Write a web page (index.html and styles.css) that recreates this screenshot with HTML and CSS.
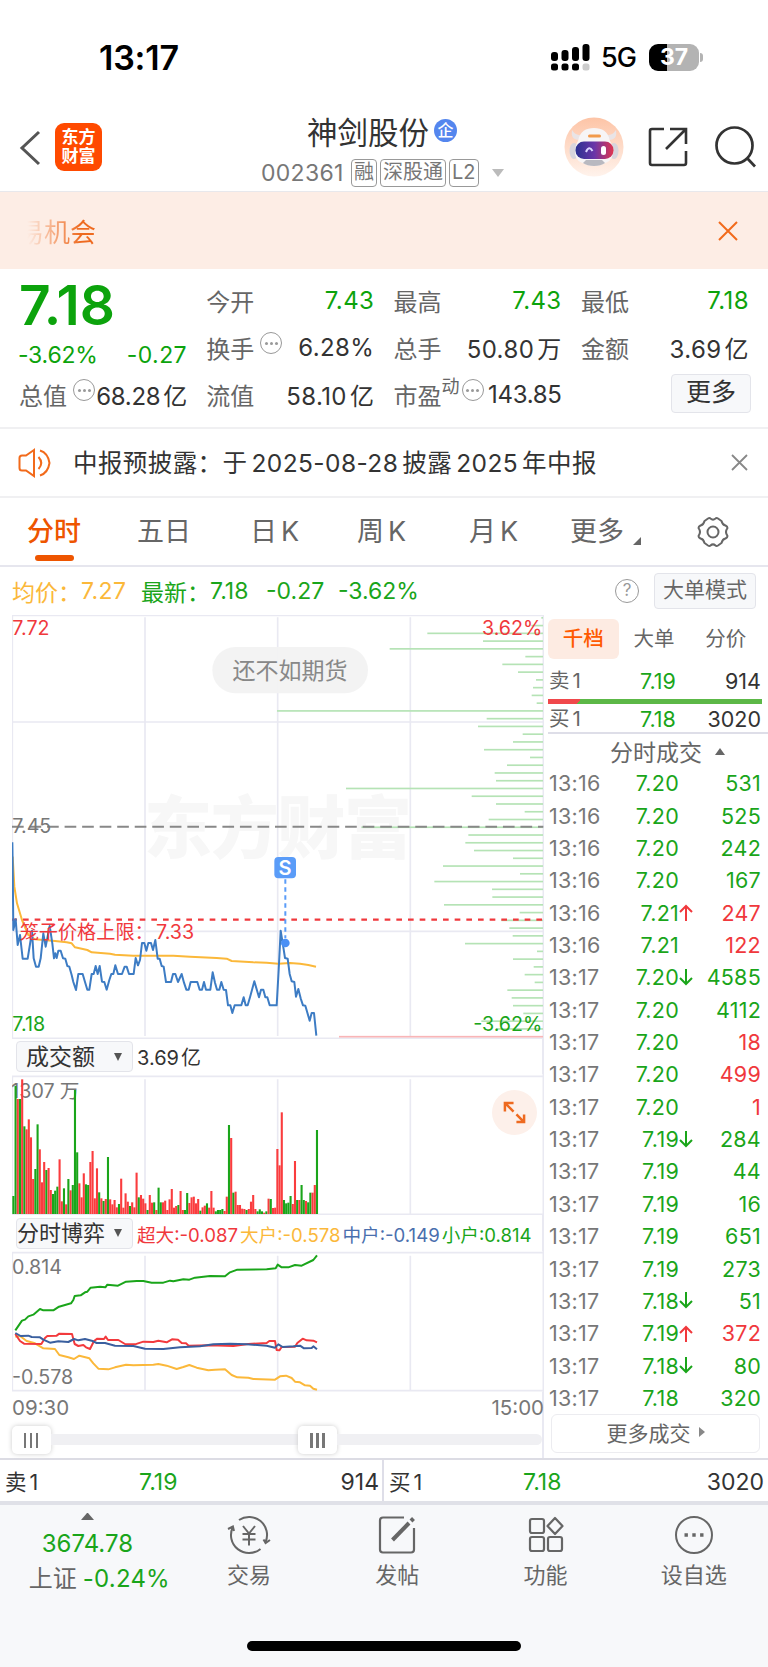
FILE: index.html
```
<!DOCTYPE html>
<html lang="zh-CN">
<head>
    <title>神剑股份 002361</title>
    <meta charset="UTF-8">
    <link rel="stylesheet" href="styles.css">
</head>
<body>
<div class="status">
    <div class="clock">13:17</div>
    <svg class="signal" width="39" height="27" viewBox="0 0 39 27">
        <rect x="0" y="8" width="7" height="9" rx="3"/>
        <rect x="10.500" y="6" width="7" height="11" rx="3"/>
        <rect x="21" y="3" width="7" height="14" rx="3"/>
        <rect x="31.500" y="0" width="7" height="17" rx="3"/>
        <rect x="0" y="19.500" width="7" height="7" rx="2.500"/>
        <rect x="10.500" y="19.500" width="7" height="7" rx="2.500"/>
        <rect x="21" y="19.500" width="7" height="7" rx="2.500"/>
        <rect x="31.500" y="19.500" width="7" height="7" rx="2.500" fill="#ccc"/>
    </svg>
    <div class="net">5G</div>
    <div class="battery">37</div>
    <div class="nub"></div>
</div>

<div class="header">
    <svg class="back" width="22" height="36" viewBox="0 0 22 36"><path d="M20 2 L3 18 L20 34" fill="none" stroke="#555" stroke-width="3"/></svg>
    <div class="logo">东方<br>财富</div>
    <div class="title">
        <div class="name">神剑股份<span class="qi">企</span></div>
        <div class="code"><span class="num">002361</span><i>融</i><i>深股通</i><i>L2</i><b></b></div>
    </div>
    <svg class="robot" width="60" height="60" viewBox="0 0 60 60">
        <defs>
            <linearGradient id="bg" x1="0" y1="0" x2="0" y2="1"><stop offset="0" stop-color="#fdc4a6"/><stop offset="1" stop-color="#fff3ec"/></linearGradient>
            <linearGradient id="face" x1="0" y1="0" x2="1" y2="0"><stop offset="0" stop-color="#2b3191"/><stop offset=".5" stop-color="#6a35a8"/><stop offset="1" stop-color="#e0364f"/></linearGradient>
        </defs>
        <circle cx="30" cy="30" r="29.500" fill="url(#bg)"/>
        <path d="M8 13 C7 20 9 22 14 23 L17 18 C12 18 10 16 8 13 Z M52 13 C53 20 51 22 46 23 L43 18 C48 18 50 16 52 13 Z" fill="#e9e4e6"/>
        <ellipse cx="10" cy="34" rx="4.500" ry="8" fill="#d7d5dc"/>
        <ellipse cx="50" cy="34" rx="4.500" ry="8" fill="#d7d5dc"/>
        <path d="M14 24 C16 14 22 11 30 11 C38 11 44 14 46 24 C51 32 50 44 41 46 C36 50 24 50 19 46 C10 44 9 32 14 24 Z" fill="#f7f5f6"/>
        <path d="M19 46 C24 50 36 50 41 46 L38 43 L22 43 Z" fill="#b9b9c0"/>
        <rect x="24" y="17.500" width="13" height="3" rx="1.500" fill="#f29a4b"/>
        <rect x="11.500" y="24.500" width="38" height="17.500" rx="8.500" fill="url(#face)"/>
        <path d="M22 35 Q25 28 28.500 34" fill="none" stroke="#d9d4ff" stroke-width="2"/>
        <rect x="37" y="29" width="5" height="9" rx="2.500" fill="#fff"/>
    </svg>
    <svg class="share" width="40" height="40" viewBox="0 0 40 40" fill="none" stroke="#333" stroke-width="2.600">
        <path d="M16 2 H4 Q2 2 2 4 V36 Q2 38 4 38 H36 Q38 38 38 36 V24"/>
        <path d="M22 2 H38 V17 M38 2 L18 22"/>
    </svg>
    <svg class="search" width="42" height="42" viewBox="0 0 42 42" fill="none" stroke="#333" stroke-width="2.700">
        <circle cx="19.500" cy="19.500" r="18"/><path d="M32 32 L40 40.500"/>
    </svg>
</div>

<div class="banner">
    <span class="fade">易机会</span>
    <svg width="20" height="20" viewBox="0 0 20 20"><path d="M1 1 L19 19 M19 1 L1 19" stroke="#f26a1b" stroke-width="2"/></svg>
</div>

<div class="quote">
    <div class="cell price">7.18</div>
    <div class="cell"><span>今开</span><em class="green">7.43</em></div>
    <div class="cell"><span>最高</span><em class="green">7.43</em></div>
    <div class="cell"><span>最低</span><em class="green">7.18</em></div>

    <div class="cell change"><em class="green">-3.62%</em><em class="green">-0.27</em></div>
    <div class="cell"><span>换手</span><s class="dots"></s><em>6.28%</em></div>
    <div class="cell"><span>总手</span><em><u>50.80</u>万</em></div>
    <div class="cell"><span>金额</span><em><u>3.69</u>亿</em></div>

    <div class="cell"><span>总值</span><s class="dots"></s><em class="tight"><u>68.28</u>亿</em></div>
    <div class="cell"><span>流值</span><em><u>58.10</u>亿</em></div>
    <div class="cell"><span>市盈</span><sup>动</sup><s class="dots"></s><em class="tight">143.85</em></div>
    <div class="cell"><div class="more">更多</div></div>
</div>

<div class="notice">
    <svg width="34" height="30" viewBox="0 0 34 30" fill="none" stroke="#f26a1b" stroke-width="2">
        <path d="M16 2 L8 7.500 H4 Q1.500 7.500 1.500 10 V20 Q1.500 22.500 4 22.500 H8 L16 28 Z"/>
        <path d="M20.500 9 Q26 15 20.500 21 M22 2.500 Q30 5 31.500 15 Q30 25 22 27.500"/>
    </svg>
    <p>中报预披露：于<u>2025-08-28</u>披露<u>2025</u>年中报</p>
    <svg class="close" width="17" height="17" viewBox="0 0 17 17"><path d="M1 1 L16 16 M16 1 L1 16" stroke="#888" stroke-width="1.800"/></svg>
</div>

<div class="tabs">
    <div class="on">分时</div>
    <div>五日</div>
    <div>日<u>K</u></div>
    <div>周<u>K</u></div>
    <div>月<u>K</u></div>
    <div>更多<b></b></div>
    <svg width="32" height="32" viewBox="0 0 32 32" fill="none" stroke="#666" stroke-width="2">
        <path d="M11 2.500 Q12.500 1.500 13.500 2.500 Q16 4.800 18.500 2.500 Q19.500 1.500 21 2.500 L24.500 5 Q25.500 9 28.500 9.500 Q30.500 10.500 30.500 12 Q27.500 16 30.500 20 Q30.500 21.500 28.500 22.500 Q25.500 23 24.500 27 L21 29.500 Q19.500 30.500 18.500 29.500 Q16 27.200 13.500 29.500 Q12.500 30.500 11 29.500 L7.500 27 Q6.500 23 3.500 22.500 Q1.500 21.500 1.500 20 Q4.500 16 1.500 12 Q1.500 10.500 3.500 9.500 Q6.500 9 7.500 5 Z"/>
        <circle cx="16" cy="16" r="5.500"/>
    </svg>
</div>

<div class="avg">
    <span class="yellow w1">均价：</span><span class="yellow w2">7.27</span>
    <span class="green w1">最新：</span><span class="green w3">7.18</span><span class="green w4">-0.27</span><span class="green">-3.62%</span>
    <div class="help">?</div>
    <div class="mode">大单模式</div>
</div>

<div class="main">
    <div class="charts">
        <svg class="priceChart" width="532" height="424" viewBox="36 15 1596 1272">
            <g class="mark"><text x="432" y="730" textLength="804">东方财富</text></g>
            <g class="grid">
                <path d="M37 15 V1285 M435 22 V1278 M833 22 V1278 M1231 22 V1278 M1630 15 V1287 M36 16 H1632 M36 336 H1630 M36 964 H1630 M36 1285 H1630"/>
            </g>
            <g id="depth"></g>
            <path d="M36 650 H1630" stroke="#888" stroke-width="6" stroke-dasharray="35 17.600"/>
            <path d="M36 929 H1630" stroke="#f0383c" stroke-width="7" stroke-dasharray="17 18" stroke-dashoffset="2"/>
            <polyline class="line" stroke="#fbb83a" points="38,740 43,830 51,880 66,930 85,975 105,988 165,993 200,997 215,1000 225,1012 262,1020 275,1027 330,1031 345,1034 400,1037 520,1037 570,1040 650,1044 680,1046 695,1053 760,1057 800,1058 835,1061 870,1059 900,1061 925,1065 948,1070"/>
            <polyline class="line" stroke="#3d7cc4" points="37,697 38,760 40,960 47,928 53,1005 60,975 68,1046 83,1046 92,990 96,962 101,1045 108,1070 116,1070 122,1045 130,970 137,1010 149,948 157,1000 162,1045 166,1030 170,1044 175,1022 182,1022 189,1045 196,1046 202,1068 208,1070 215,1095 220,1116 228,1140 235,1092 248,1092 255,1116 262,1139 268,1139 275,1092 281,1092 287,1068 293,1092 299,1068 306,1115 313,1116 320,1139 328,1110 334,1092 340,1092 346,1066 354,1092 366,1092 374,1070 380,1070 387,1092 401,1092 407,1044 414,1066 420,1050 426,999 433,999 439,1022 445,999 453,999 459,1020 466,990 473,1046 479,1046 485,1068 491,1070 498,1116 513,1116 519,1092 526,1092 534,1116 545,1092 552,1118 559,1139 566,1139 572,1116 592,1116 599,1139 606,1139 612,1116 618,1139 631,1139 638,1087 645,1118 651,1139 658,1139 664,1116 671,1139 678,1140 684,1186 691,1186 697,1209 704,1186 724,1186 731,1162 737,1186 743,1186 750,1162 763,1114 777,1162 783,1139 790,1139 796,1162 802,1162 809,1186 830,1186 836,1080 842,962 851,1018 855,1044 863,1046 869,1092 875,1114 883,1116 888,1160 895,1137 902,1165 909,1186 916,1187 929,1232 935,1209 942,1209 949,1277"/>
            <path d="M856 808 V985" stroke="#5a9cf8" stroke-width="6" stroke-dasharray="13 11"/>
            <circle cx="856" cy="999" r="13" fill="#4a90f5"/>
            <rect x="823" y="741" width="65" height="64" rx="12" fill="#5a9cf8"/>
            <text class="s" x="855" y="795" text-anchor="middle">S</text>
            <text class="red" x="37" y="74">7.72</text>
            <text class="red" x="1627" y="74" text-anchor="end">3.62%</text>
            <text class="gray" x="37" y="669">7.45</text>
            <text class="green" x="37" y="1263">7.18</text>
            <text class="green" x="1627" y="1263" text-anchor="end">-3.62%</text>
            <text class="red cage" x="59" y="987">笼子价格上限：</text>
            <text class="red" x="468" y="987">7.33</text>
            <rect x="637" y="111" width="467" height="139" rx="69" fill="#f2f2f2" fill-opacity=".94"/>
            <text class="pill" x="870" y="206" text-anchor="middle">还不如期货</text>
        </svg>

        <div class="bar"><div class="pick">成交额<b></b></div><span class="sum"><u>3.69</u>亿</span></div>

        <div class="volBox">
            <svg width="532" height="141" viewBox="36 102 1596 423">
                <g class="grid"><path d="M37 109 V523 M435 118 V523 M833 118 V523 M1231 118 V523 M1630 102 V525 M36 109 H1630 M36 523 H1630"/></g>
                <text class="gray" x="34" y="175">1307</text><text class="gray" x="179" y="175">万</text>
                <g id="volume"></g>
            </svg>
            <div class="expand">
                <svg width="23" height="23" viewBox="0 0 24 24" fill="none" stroke="#ee6a20" stroke-width="2.600"><path d="M2 11 V2 H11 M2 2 L11 11 M22 14 V22 H14 M22 22 L14 14"/></svg>
            </div>
        </div>

        <div class="bar bar2"><div class="pick">分时博弈<b></b></div><div class="legend"><span class="red">超大:-0.087</span><span class="yellow">大户:-0.578</span><span class="blue">中户:-0.149</span><span class="green">小户:0.814</span></div></div>

        <svg width="532" height="141" viewBox="36 108 1596 423">
            <g class="grid"><path d="M37 113 V527 M435 122 V527 M833 122 V527 M1231 122 V527 M1630 108 V531 M36 113 H1630 M36 527 H1630"/></g>
            <text class="gray" x="36" y="178">0.814</text>
            <text class="gray" x="36" y="506">-0.578</text>
            <polyline class="line" stroke="#fbb83a" points="46,365 60,363 80,378 105,385 130,400 165,402 178,420 205,427 222,432 238,422 268,430 280,445 295,461 325,463 345,457 378,449 400,451 460,449 475,447 500,452 530,462 550,456 568,450 590,458 625,466 645,464 675,463 695,480 712,487 745,488 760,492 825,494 840,484 858,482 875,489 885,500 900,502 915,511 930,512 940,521 951,524"/>
            <polyline class="line" stroke="#f23a3d" points="46,357 60,378 72,386 124,387 135,369 142,363 170,362 178,356 216,357 224,387 235,393 250,390 258,397 270,402 282,378 292,371 312,372 317,365 324,375 355,375 375,387 405,388 430,380 460,381 475,377 500,382 516,373 534,374 545,384 558,385 566,392 630,391 700,393 745,387 800,384 808,378 825,378 830,405 838,406 845,396 885,395 892,384 908,371 920,376 940,377 951,382"/>
            <polyline class="line" stroke="#3a5f9f" points="46,354 62,363 85,362 95,366 120,367 130,374 150,383 175,379 205,381 222,372 235,376 255,372 275,377 290,384 315,384 345,392 400,393 435,401 490,402 540,397 600,394 640,388 690,386 740,388 800,392 825,398 835,388 848,396 880,394 900,392 912,400 935,399 940,394 951,403"/>
            <polyline class="line" stroke="#1aa51a" points="46,346 66,317 75,314 85,304 100,299 120,282 130,286 160,286 177,275 213,265 220,255 224,243 242,241 255,232 262,230 272,218 300,215 316,217 322,209 354,212 378,200 410,198 430,198 455,203 490,203 510,197 520,199 550,193 568,194 585,188 630,183 675,184 690,172 712,164 800,163 827,160 833,149 845,157 865,157 885,150 905,152 940,135 951,121"/>
        </svg>

        <div class="times"><span>09:30</span><span>15:00</span></div>
        <div class="slider"><div class="knob"></div><div class="track"></div><div class="knob"></div><div class="track end"></div></div>
    </div>

    <div class="side">
        <div class="sideTabs"><div class="on">千档</div><div>大单</div><div>分价</div></div>
        <div class="level"><span>卖<u>1</u></span><span class="green">7.19</span><span>914</span></div>
        <div class="ratio"></div>
        <div class="level buy"><span>买<u>1</u></span><span class="green">7.18</span><span>3020</span></div>
        <div class="dealTitle">分时成交<b></b></div>
        <div id="deals"></div>
        <div class="moreDeals">更多成交<b></b></div>
    </div>
</div>

<div class="best">
    <div><span>卖<u>1</u></span><span class="green">7.19</span><span>914</span></div>
    <div><span>买<u>1</u></span><span class="green">7.18</span><span>3020</span></div>
</div>

<div class="nav">
    <div class="index">
        <b></b>
        <div class="green">3674.78</div>
        <div class="sh">上证<span class="green">-0.24%</span></div>
    </div>
    <div class="item">
        <svg width="44" height="40" viewBox="0 0 44 40" fill="none" stroke="#666" stroke-width="2">
            <path d="M12 5 A18 18 0 0 1 38.600 27 M33.500 33.900 A18 18 0 0 1 5.900 12 M1 14 L5.900 11.500 L7 16 M43 25 L38.600 28 L36.500 24.500"/>
            <path d="M16 11 L22 18.500 L28 11 M15.500 19 H28.500 M15.500 24.500 H28.500 M22 18.500 V30.500"/>
        </svg>
        <p>交易</p>
    </div>
    <div class="item">
        <svg width="40" height="40" viewBox="0 0 40 40" fill="none" stroke="#666" stroke-width="2.200">
            <path d="M27 2.500 H6 Q3 2.500 3 5.500 V34.500 Q3 37.500 6 37.500 H34 Q37 37.500 37 34.500 V13"/>
            <path d="M15.500 25 L32 8" stroke-width="4"/><path d="M34 6 L36.500 3.500" stroke-width="4"/>
        </svg>
        <p>发帖</p>
    </div>
    <div class="item">
        <svg width="38" height="40" viewBox="0 0 38 40" fill="none" stroke="#666" stroke-width="2.200">
            <rect x="3" y="4" width="14" height="14" rx="2"/><rect x="3" y="22" width="14" height="14" rx="2"/><rect x="21" y="22" width="14" height="14" rx="2"/>
            <path d="M28 3 L35.500 11 L28 19 L20.500 11 Z" stroke-linejoin="round"/>
        </svg>
        <p>功能</p>
    </div>
    <div class="item">
        <svg width="40" height="40" viewBox="0 0 40 40" fill="none" stroke="#666" stroke-width="2">
            <circle cx="20" cy="20" r="18"/>
            <path d="M10.500 20 h3.400 M18.300 20 h3.400 M26.100 20 h3.400" stroke-width="3.400"/>
        </svg>
        <p>设自选</p>
    </div>
</div>
<div class="home"><div></div></div>

<script>
    var deals = [
        ["13:16", "7.20", "", "531", "g"], ["13:16", "7.20", "", "525", "g"],
        ["13:16", "7.20", "", "242", "g"], ["13:16", "7.20", "", "167", "g"],
        ["13:16", "7.21", "up", "247", "r"], ["13:16", "7.21", "", "122", "r"],
        ["13:17", "7.20", "down", "4585", "g"], ["13:17", "7.20", "", "4112", "g"],
        ["13:17", "7.20", "", "18", "r"], ["13:17", "7.20", "", "499", "r"],
        ["13:17", "7.20", "", "1", "r"], ["13:17", "7.19", "down", "284", "g"],
        ["13:17", "7.19", "", "44", "g"], ["13:17", "7.19", "", "16", "g"],
        ["13:17", "7.19", "", "651", "g"], ["13:17", "7.19", "", "273", "g"],
        ["13:17", "7.18", "down", "51", "g"], ["13:17", "7.19", "up", "372", "r"],
        ["13:17", "7.18", "down", "80", "g"], ["13:17", "7.18", "", "320", "g"]
    ];
    var arrows = {
        up: "<svg class='arrow' width='14' height='17' viewBox='0 0 14 17'><path d='M7 17 V2 M1 8 L7 2 L13 8' fill='none' stroke='#f0383c' stroke-width='2'/></svg>",
        down: "<svg class='arrow' width='14' height='17' viewBox='0 0 14 17'><path d='M7 0 V15 M1 9 L7 15 L13 9' fill='none' stroke='#1aa51a' stroke-width='2'/></svg>",
        "": ""
    };
    var html = "";
    for (let i = 0; i < deals.length; i++) {
        let d = deals[i];
        html += "<div class='deal'><span>" + d[0] + "</span><span class='green'>" + d[1] + "</span><span>" + arrows[d[2]] + "</span>";
        html += "<span class='" + (d[4] == "g" ? "green" : "red") + "'>" + d[3] + "</span></div>";
    }
    document.getElementById("deals").innerHTML = html;

    // turnover per minute, g = down, r = up
    var volume = ("g54 g384 r345 g345 r404 g263 r254 r284 r230 r105 g135 g269 r194 r95 r156 g132 r138 r72 g60 g70 g82 r164 r38 g77 r29 g105 r71 g87 g372 g185 " +
        "r92 r50 r122 g89 g87 r156 r189 r47 r137 g65 r47 g39 r45 g171 r44 r29 r42 r20 g30 r106 r19 r62 r37 g24 r35 r20 r124 g50 r57 r46 " +
        "r32 g12 r57 r34 g35 r12 g79 g35 r35 r40 r12 r44 r75 r19 r24 g27 r69 r12 g12 g63 r33 r50 r52 r32 r45 g10 r20 r25 g32 r19 " +
        "r69 r19 g8 g12 g12 g15 r9 r52 g267 r228 g64 r67 r27 r27 r16 r15 g12 r15 r37 r57 r15 g8 g14 g8 r4 g8 r46 g45 r18 r19 " +
        "r195 r146 r305 g42 g32 g34 g54 r30 r159 g42 r42 g87 g42 r39 g35 g64 r64 r87 g252").split(" ");
    html = "";
    for (let i = 0; i < volume.length; i++) {
        let h = Number(volume[i].substring(1));
        html += "<rect x='" + (37 + i * 6.6) + "' y='" + (522 - h) + "' width='6.300' height='" + h + "' fill='" + (volume[i][0] == "g" ? "#1aa51a" : "#fa3c3e") + "'/>";
    }
    document.getElementById("volume").innerHTML = html;

    var depth = [5, 35, 347, 180, 460, 53, 122, 75, 21, 30, 34, 19, 798, 169, 195, 61, 90, 177, 39, 108, 145, 141, 591, 214, 141, 55, 163, 545, 224, 233,
        207, 90, 300, 69, 326, 153, 152, 297, 70, 125, 101, 91, 234, 18, 90, 28, 55, 25, 107, 94, 90, 59, 185, 140, 612];
    html = "";
    for (let i = 0; i < depth.length; i++) {
        html += "<rect x='" + (1629 - depth[i]) + "' y='" + (21 + i * 23.27) + "' width='" + depth[i] + "' height='5' fill='" + (i == depth.length - 1 ? "#f9b5b7" : "#b5e3b5") + "'/>";
    }
    document.getElementById("depth").innerHTML = html;
</script>
</body>
</html>
```
FILE: styles.css
```
* {
    box-sizing: border-box;
}
body {
    margin: 0;
    width: 768px;
    height: 1667px;
    overflow: hidden;
    background-color: #fff;
    color: #333;
    font-family: Inter, "Noto Sans CJK SC", sans-serif;
}
em, i, u, s {
    font-style: normal;
    text-decoration: none;
}
p {
    margin: 0;
}
svg {
    display: block;
    flex: none;
}
.green {
    color: #1aa51a;
    fill: #1aa51a;
}
.red {
    color: #f0383c;
    fill: #f0383c;
}
.yellow {
    color: #fbb83a;
}
.blue {
    color: #4a6fae;
}
.gray {
    fill: #777;
}

/* status bar */
.status {
    display: flex;
    align-items: center;
    height: 114px;
    padding-left: 99px;
    color: #000;
}
.clock {
    width: 452px;
    font-size: 34px;
    font-weight: 600;
    letter-spacing: -0.200px;
}
.net {
    width: 48px;
    margin-left: 11px;
    font-size: 27px;
    font-weight: 500;
    letter-spacing: -1px;
}
.battery {
    width: 50px;
    height: 27px;
    border-radius: 9px;
    background: linear-gradient(to right, #000 37%, #b3b3b3 37%);
    color: #fff;
    font-size: 23px;
    font-weight: 700;
    line-height: 27px;
    text-align: center;
}
.nub {
    width: 3px;
    height: 9px;
    margin-left: 1px;
    border-radius: 0 3px 3px 0;
    background-color: #b3b3b3;
}

/* header */
.header {
    display: flex;
    height: 78px;
    border-bottom: 1px solid #e8e8ec;
}
.back {
    margin: 16px 0 0 19px;
}
.logo {
    width: 47px;
    height: 48px;
    margin: 9px 0 0 14px;
    padding-top: 5px;
    border-radius: 9px;
    background-color: #ff4a00;
    color: #fff;
    font-size: 17px;
    font-weight: 700;
    line-height: 19px;
    text-align: center;
}
.title {
    width: 302px;
    margin-left: 160px;
}
.name {
    display: flex;
    align-items: center;
    height: 33px;
    padding-left: 45px;
    font-size: 30.500px;
}
.qi {
    width: 23px;
    height: 23px;
    margin-left: 5px;
    border-radius: 50%;
    background-color: #5486ee;
    color: #fff;
    font-size: 16px;
    font-weight: 500;
    line-height: 22px;
    text-align: center;
}
.code {
    display: flex;
    align-items: center;
    height: 51px;
    color: #777;
    font-size: 23px;
}
.code .num {
    width: 90px;
    margin-left: -1px;
    letter-spacing: 0.300px;
}
.code i {
    height: 28px;
    margin-right: 3px;
    padding: 0 2px;
    border: 1.500px solid #999;
    border-radius: 4px;
    font-size: 20px;
    line-height: 25px;
}
.code b {
    margin-left: 10px;
    border: 6.500px solid transparent;
    border-top: 8px solid #bbb;
    border-bottom: 0;
}
.robot {
    margin: 3px 0 0 0;
}
.share {
    margin: 13px 0 0 24px;
}
.search {
    margin: 12px 0 0 27px;
}

.banner {
    display: flex;
    align-items: center;
    justify-content: space-between;
    height: 77px;
    padding: 0 30px 0 18px;
    background-color: #fdede5;
}
.fade {
    font-size: 26px;
    color: transparent;
    background: linear-gradient(to right, rgba(242, 106, 27, 0) 12%, #ee6a20 80%);
    -webkit-background-clip: text;
    background-clip: text;
}

/* quote */
.quote {
    display: grid;
    grid-template-columns: repeat(4, 168px);
    grid-template-rows: 47px 47px 47px;
    column-gap: 19.300px;
    height: 160px;
    padding: 8px 0 0 19px;
    border-bottom: 2px solid #f0f0f2;
}
.cell {
    display: flex;
    align-items: center;
    color: #666;
    font-size: 24px;
    white-space: nowrap;
}
.cell em {
    margin-left: auto;
    color: #333;
    letter-spacing: 0.400px;
}
.cell em.tight {
    letter-spacing: -0.300px;
}
.cell em u {
    margin-right: 3px;
}
.cell em.green {
    color: #0ca30c;
}
.cell.price {
    padding-top: 9px;
    color: #0ca30c;
    font-size: 55px;
    font-weight: 600;
}
.cell.change {
    padding-top: 15px;
    font-size: 23px;
}
.cell.change em:first-child {
    margin-left: -1px;
    letter-spacing: -0.200px;
}
.cell sup {
    align-self: flex-start;
    font-size: 18px;
    line-height: 32px;
}
.dots {
    display: flex;
    flex: none;
    align-items: center;
    justify-content: center;
    width: 22px;
    height: 22px;
    margin: 0 1px 9px 6px;
    border: 1.500px solid #999;
    border-radius: 50%;
}
.dots::before {
    content: "";
    width: 3px;
    height: 3px;
    border-radius: 50%;
    background-color: #999;
    box-shadow: -5px 0 #999, 5px 0 #999;
}
sup + .dots {
    margin-left: 2px;
}
.more {
    width: 80px;
    height: 39px;
    margin: -3px -2px 0 auto;
    border: 1.500px solid #e3e4ea;
    border-radius: 4px;
    background-color: #f7f8fa;
    color: #333;
    font-size: 25px;
    line-height: 35px;
    text-align: center;
}

.notice {
    display: flex;
    align-items: center;
    height: 69px;
    padding: 0 20px 0 18px;
    border-bottom: 2px solid #f0f0f2;
}
.notice p {
    margin: -3px 0 0 21px;
    font-size: 24.500px;
    letter-spacing: 0.420px;
    white-space: nowrap;
}
.notice u {
    margin: 0 4px;
}
.close {
    margin-left: auto;
}

/* tabs */
.tabs {
    display: grid;
    grid-template-columns: 110px 113px 107px 112px 101px 127px 1fr;
    align-items: center;
    height: 69px;
    padding-left: 27px;
    border-bottom: 2px solid #e6e6ee;
    color: #666;
    font-size: 27px;
    line-height: 64px;
}
.tabs u {
    margin-left: 4px;
}
.tabs .on {
    color: #ee5500;
    font-weight: 500;
}
.tabs .on::after {
    content: "";
    display: block;
    width: 39px;
    height: 6px;
    margin: -9px 0 3px 8px;
    border-radius: 3px;
    background-color: #ee5500;
}
.tabs b {
    display: inline-block;
    margin: 0 0 -4px 9px;
    border-left: 8px solid transparent;
    border-bottom: 8px solid #666;
}

.avg {
    display: flex;
    align-items: center;
    height: 48px;
    padding-left: 12px;
    font-size: 23px;
    white-space: nowrap;
}
.w1 {
    width: 69px;
}
.w2 {
    width: 60px;
    letter-spacing: 0.400px;
}
.w3 {
    width: 56px;
}
.w4 {
    width: 72px;
}
.help {
    width: 24px;
    height: 24px;
    margin-left: auto;
    border: 1.500px solid #999;
    border-radius: 50%;
    color: #999;
    font-size: 17px;
    line-height: 21px;
    text-align: center;
}
.mode {
    width: 102px;
    height: 36px;
    margin: 0 12px 0 15px;
    border: 1.500px solid #e3e4ea;
    border-radius: 4px;
    background-color: #f7f8fa;
    color: #666;
    font-size: 21px;
    line-height: 32px;
    text-align: center;
}

/* charts */
.main {
    display: flex;
    height: 845px;
    border-bottom: 2px solid #dcdce4;
}
.charts {
    width: 532px;
    margin-left: 12px;
}
.charts text {
    font-size: 59px;
}
.charts .cage {
    font-size: 57.500px;
}
.grid path {
    fill: none;
    stroke: #e9e9f2;
    stroke-width: 5;
}
.line {
    fill: none;
    stroke-width: 6;
    stroke-linejoin: round;
}
.charts .mark text {
    fill: #f7f7f7;
    font-size: 204px;
    font-weight: 900;
}
.charts .s {
    fill: #fff;
    font-size: 60px;
    font-weight: 600;
}
.charts .pill {
    fill: #888;
    font-size: 69px;
}
.bar {
    display: flex;
    align-items: center;
    height: 35px;
    padding-left: 4px;
    border-right: 2px solid #e9e9f2;
    white-space: nowrap;
}
.pick {
    display: flex;
    align-items: center;
    justify-content: space-between;
    width: 117px;
    height: 31px;
    padding: 0 10px 0 9px;
    border: 1.500px solid #e3e4ea;
    border-radius: 4px;
    background-color: #f7f8fa;
    font-size: 23px;
    line-height: 28px;
}
.pick b {
    border: 4.500px solid transparent;
    border-top: 8px solid #555;
    border-bottom: 0;
}
.sum {
    margin-left: 4px;
    font-size: 20px;
}
.sum u {
    margin-right: 2px;
}
.bar2 {
    height: 36px;
}
.bar2 .pick {
    padding-left: 0;
    font-size: 22px;
}
.bar2 .pick b {
    margin-left: -2px;
}
.legend {
    display: flex;
    margin-left: 4px;
    gap: 2px;
    font-size: 18.600px;
}
.volBox {
    position: relative;
}
.expand {
    position: absolute;
    top: 16px;
    right: 7px;
    width: 45px;
    height: 45px;
    padding: 11px;
    border-radius: 50%;
    background-color: #fdf0ea;
}
.times {
    display: flex;
    justify-content: space-between;
    height: 29px;
    border-right: 2px solid #e9e9f2;
    color: #777;
    font-size: 20.500px;
    line-height: 31px;
}
.times span:last-child {
    margin-right: -2px;
}
.slider {
    display: flex;
    align-items: center;
    height: 37px;
    border-right: 2px solid #e9e9f2;
}
.knob {
    width: 39px;
    height: 28px;
    padding: 7px 12px;
    border-radius: 5px;
    background-color: #fff;
    box-shadow: 0 0 5px #ccc;
}
.knob::before {
    content: "";
    display: block;
    height: 15px;
    background: repeating-linear-gradient(to right, #777 0 2.500px, #fff 2.500px 6px);
}
.track {
    width: 247px;
    height: 11px;
    background-color: #f0f0f3;
}
.end {
    flex: 1;
    border-radius: 0 6px 6px 0;
}

/* right side */
.side {
    width: 224px;
    padding: 4px 7px 0 4px;
    white-space: nowrap;
}
.side u,
.best u {
    margin-left: 3px;
}
.sideTabs {
    display: flex;
    height: 40px;
    color: #666;
    font-size: 20.500px;
    line-height: 39px;
    text-align: center;
}
.sideTabs div {
    width: 72px;
}
.sideTabs div:last-child {
    margin-left: 1px;
}
.sideTabs .on {
    border-radius: 6px;
    background-color: #fdebe2;
    color: #ff5a00;
    font-weight: 500;
}
.level {
    display: grid;
    grid-template-columns: 91px 50px 1fr;
    align-items: center;
    height: 40px;
    padding: 3px 0 0 1px;
    color: #666;
    font-size: 21.500px;
    line-height: 26px;
}
.level > span:first-child {
    font-size: 20.500px;
}
.level > span:last-child {
    color: #333;
    text-align: right;
}
.ratio {
    height: 5px;
    margin-right: -1px;
    background: linear-gradient(125deg, #f0484b 15%, #5cb847 15%);
}
.buy {
    height: 30px;
    margin-right: -7px;
    padding: 2px 7px 0 1px;
    border-bottom: 2px solid #dedee8;
}
.dealTitle {
    display: flex;
    align-items: center;
    height: 33px;
    padding: 1px 0 0 62px;
    color: #666;
    font-size: 23px;
}
.dealTitle b {
    margin-left: 13px;
    border: 5px solid transparent;
    border-bottom: 7px solid #666;
    border-top: 0;
}
.deal {
    display: grid;
    grid-template-columns: 61px 69px 25px 1fr;
    align-items: center;
    height: 32.370px;
    padding-left: 1px;
    color: #777;
    font-size: 21.500px;
    letter-spacing: 0.250px;
}
.deal .green:nth-child(2),
.deal span:last-child {
    text-align: right;
}
.moreDeals {
    display: flex;
    align-items: center;
    justify-content: center;
    height: 39px;
    margin: 0 1px 0 3px;
    padding-bottom: 3px;
    border: 1.500px solid #ececf0;
    border-radius: 6px;
    color: #666;
    font-size: 21px;
}
.moreDeals b {
    margin-left: 8px;
    border: 5px solid transparent;
    border-left: 6px solid #888;
    border-right: 0;
}

.best {
    display: flex;
    height: 45px;
    border-bottom: 4px solid #e0e1e8;
}
.best div {
    display: grid;
    grid-template-columns: 134px 80px 1fr;
    align-items: center;
    width: 382px;
    padding: 3px 3px 0 5px;
    font-size: 23px;
    line-height: 30px;
}
.best div + div {
    width: 386px;
    padding-right: 4px;
    border-left: 2px solid #dedee8;
}
.best div > span:first-child {
    font-size: 21.500px;
}
.best div > span:last-child {
    text-align: right;
}

/* bottom nav */
.nav {
    display: flex;
    height: 122px;
    background-color: #f7f8fa;
    color: #666;
    text-align: center;
}
.index {
    width: 175px;
    font-size: 24px;
    line-height: 35px;
}
.index b {
    display: block;
    width: 13px;
    margin: 8px auto 6px;
    border: 6.500px solid transparent;
    border-bottom: 7px solid #666;
    border-top: 0;
}
.index .sh {
    padding-left: 24px;
}
.index span {
    margin-left: 6px;
    letter-spacing: 0.200px;
}
.item {
    width: 148.500px;
    padding-top: 10px;
    font-size: 22px;
    line-height: 41px;
}
.item svg {
    margin: 0 auto;
}
.home {
    height: 40px;
    padding-top: 14px;
    background-color: #f7f8fa;
}
.home div {
    width: 274px;
    height: 10px;
    margin: 0 auto;
    border-radius: 5px;
    background-color: #000;
}
```
